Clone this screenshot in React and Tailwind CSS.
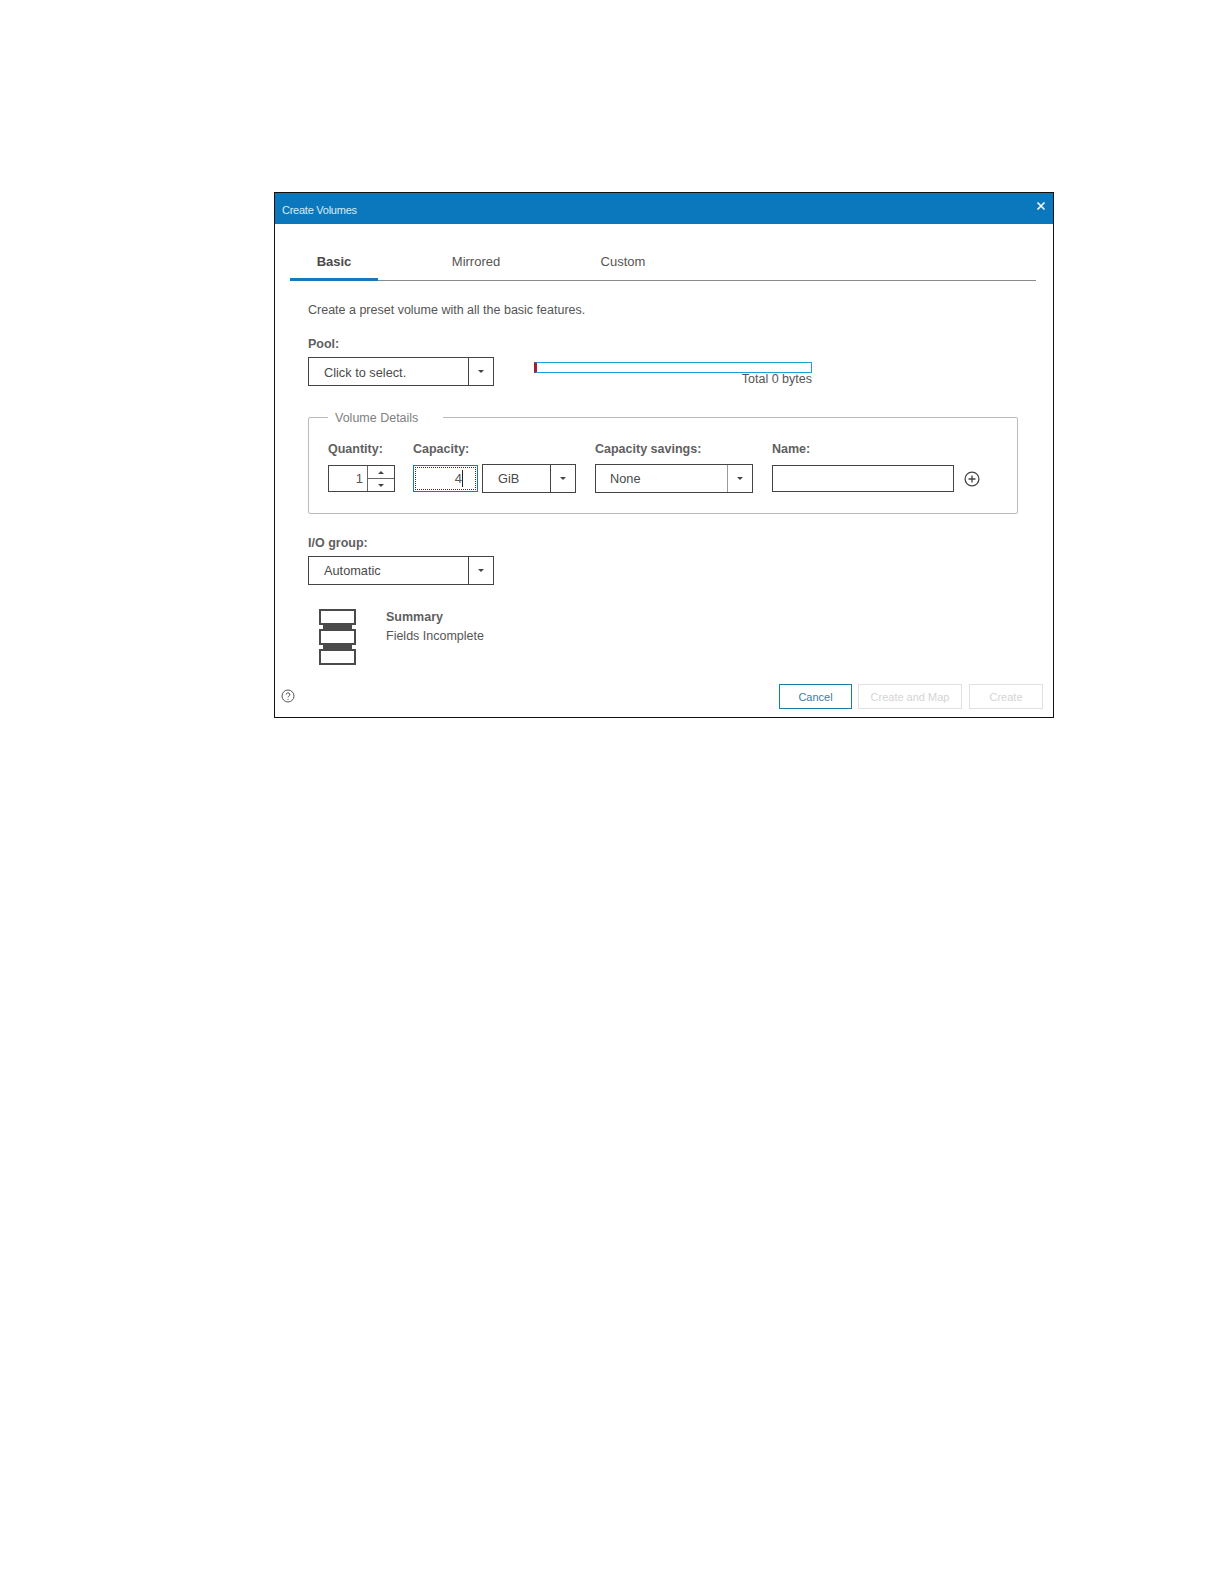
function Caret() {
  return (
    <svg width="6" height="3" viewBox="0 0 6 3">
      <polygon points="0,0 6,0 3,3" fill="#444" />
    </svg>
  )
}

function Select({ value, className, divider = 'border-[#444]', textPad = 'pl-[15px] pt-[2px]' }) {
  return (
    <div className={`flex border border-[#444] bg-white ${className}`}>
      <div className={`flex-1 flex items-center text-[12.75px] text-[#4a4a4a] ${textPad}`}>{value}</div>
      <div className={`flex items-center justify-center border-l w-[25px] ${divider}`}>
        <Caret />
      </div>
    </div>
  )
}

function Label({ children, className = '' }) {
  return <div className={`font-bold text-[12.5px] leading-[16px] text-[#5f5f5f] ${className}`}>{children}</div>
}

function SummaryIcon() {
  return (
    <svg width="38" height="56" viewBox="0 0 38 56" className="shrink-0">
      <rect x="1" y="1" width="35" height="14" fill="#fff" stroke="#4a4a4a" strokeWidth="2" />
      <rect x="4" y="15" width="29" height="5" fill="#4a4a4a" />
      <rect x="1" y="21" width="35" height="14" fill="#fff" stroke="#4a4a4a" strokeWidth="2" />
      <rect x="4" y="35" width="29" height="6" fill="#4a4a4a" />
      <rect x="1" y="41" width="35" height="14" fill="#fff" stroke="#4a4a4a" strokeWidth="2" />
    </svg>
  )
}

export default function App() {
  return (
    <div className="w-[1224px] h-[1584px] bg-white pt-[192px] pl-[274px] font-['Liberation_Sans',sans-serif]">
      <div className="w-[780px] h-[526px] border border-[#111] flex flex-col bg-white">
        <div className="h-[31px] bg-[#0b78bd] flex items-center justify-between pl-[7px] pr-[5px] shrink-0">
          <span className="text-[11px] tracking-[-0.25px] text-[#d8ecf8] mt-[3px]">Create Volumes</span>
          <svg width="14" height="14" viewBox="0 0 14 14" className="mb-[5px]">
            <path d="M3.5 3.5l7 7M10.5 3.5l-7 7" stroke="#fff" strokeWidth="1.6" />
          </svg>
        </div>

        <div className="ml-[15px] mr-[17px] mt-[27px] h-[30px] flex border-b border-[#8a8a8a] text-[13px] text-[#555]">
          <div className="w-[88px] h-[30px] border-b-[3px] border-[#1b78b8] text-center font-bold leading-[22px] text-[#4a4a4a]">Basic</div>
          <div className="w-[196px] text-center leading-[22px]">Mirrored</div>
          <div className="w-[98px] text-center leading-[22px]">Custom</div>
        </div>

        <div className="pl-[33px] flex-1 flex flex-col">
          <p className="text-[12.5px] leading-[16px] text-[#555] mt-[21px]">Create a preset volume with all the basic features.</p>

          <Label className="mt-[18px]">Pool:</Label>
          <div className="flex mt-[5px]">
            <Select value="Click to select." className="w-[186px] h-[29px]" />
            <div className="ml-[40px] mt-[5px] w-[278px]">
              <div className="h-[11px] border border-[#1ba3d6] border-l-[3px] border-l-[#a3202c]" />
              <div className="text-[12.5px] leading-[12px] text-right text-[#555]">Total 0 bytes</div>
            </div>
          </div>

          <fieldset className="mt-[24px] w-[710px] h-[104px] border border-[#bbb] rounded-[2px] pl-[19px]">
            <legend className="pl-[7px] pr-[25px] pt-[1px] text-[12.5px] leading-[14px] text-[#808080]">Volume Details</legend>
            <div className="flex mt-[16px]">
              <div className="w-[85px]">
                <Label>Quantity:</Label>
                <div className="mt-[8px] w-[67px] h-[27px] border border-[#444] flex">
                  <div className="w-[38px] text-right pr-[4px] text-[13px] leading-[25px] text-[#555]">1</div>
                  <div className="flex-1 border-l border-[#666] flex flex-col">
                    <div className="flex-1 flex items-center justify-center border-b border-[#666]">
                      <svg width="6" height="3" viewBox="0 0 6 3"><polygon points="0,3 6,3 3,0" fill="#444" /></svg>
                    </div>
                    <div className="flex-1 flex items-center justify-center"><Caret /></div>
                  </div>
                </div>
              </div>
              <div className="w-[182px]">
                <Label>Capacity:</Label>
                <div className="flex mt-[7px] items-center">
                  <div className="w-[65px] h-[27px] border border-[#1a78b0] p-[1px]">
                    <div className="h-full border border-dotted border-[#333] flex items-center justify-end pr-[12px] text-[13px] text-[#555]">
                      4<span className="w-[1px] h-[17px] bg-[#222]" />
                    </div>
                  </div>
                  <Select value="GiB" textPad="pl-[15px]" className="ml-[4px] w-[94px] h-[29px]" />
                </div>
              </div>
              <div className="w-[177px]">
                <Label>Capacity savings:</Label>
                <Select value="None" textPad="pl-[14px]" className="mt-[7px] w-[158px] h-[29px]" divider="border-[#999]" />
              </div>
              <div>
                <Label>Name:</Label>
                <div className="flex items-center mt-[8px]">
                  <div className="w-[182px] h-[27px] border border-[#444]" />
                  <svg width="16" height="16" viewBox="0 0 16 16" className="ml-[10px] mt-[1px]">
                    <circle cx="8" cy="8" r="6.9" fill="none" stroke="#444" strokeWidth="1.3" />
                    <path d="M8 4.5v7M4.5 8h7" stroke="#444" strokeWidth="1.3" />
                  </svg>
                </div>
              </div>
            </div>
          </fieldset>

          <Label className="mt-[21px]">I/O group:</Label>
          <Select value="Automatic" textPad="pl-[15px]" className="mt-[5px] w-[186px] h-[29px]" />

          <div className="flex mt-[24px] ml-[11px]">
            <SummaryIcon />
            <div className="ml-[29px] -mt-[1px] text-[12.5px] leading-[19px] text-[#555]">
              <div className="font-bold text-[#5f5f5f]">Summary</div>
              <div>Fields Incomplete</div>
            </div>
          </div>
        </div>

        <div className="flex items-center pl-[6px] pr-[10px] mb-[8px] h-[26px]">
          <svg width="14" height="14" viewBox="0 0 14 14" className="mb-[1px]">
            <circle cx="7" cy="7" r="6" fill="none" stroke="#555" strokeWidth="1" />
            <path d="M5.2 5.6a1.8 1.8 0 1 1 2.6 1.6c-.6.3-.8.6-.8 1.2" fill="none" stroke="#555" strokeWidth="1" />
            <circle cx="7" cy="10.3" r=".6" fill="#555" />
          </svg>
          <div className="ml-auto flex">
            <div className="w-[73px] h-[25px] border border-[#1a78b0] text-[11px] leading-[24px] text-center text-[#3a7ca8]">Cancel</div>
            <div className="ml-[6px] w-[104px] h-[25px] border border-[#e0e0e0] text-[11px] leading-[24px] text-center text-[#d4d4d4]">Create and Map</div>
            <div className="ml-[7px] w-[74px] h-[25px] border border-[#e0e0e0] text-[11px] leading-[24px] text-center text-[#d4d4d4]">Create</div>
          </div>
        </div>
      </div>
    </div>
  )
}
